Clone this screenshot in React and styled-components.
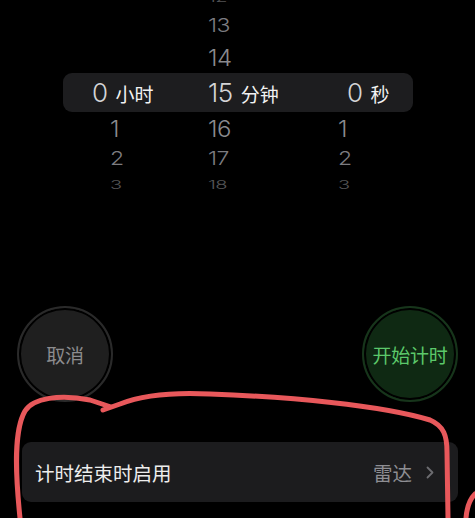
import React from 'react'
import styled, { createGlobalStyle } from "styled-components";

const GlobalStyle = createGlobalStyle`
    html, body {
        margin: 0;
        padding: 0;
        background: #000;
    }
    body {
        font-family: "Inter", "Noto Sans CJK SC", sans-serif;
        -webkit-font-smoothing: antialiased;
    }
`;

const Screen = styled.div`
    position: relative;
    width: 475px;
    height: 518px;
    overflow: hidden;
    background: #000;
    color: #fff;
`;

//picker wheel
const Wheel = styled.div`
    height: 192px;
    overflow: hidden;
`;

const Track = styled.div`
    margin-top: -15px;
    display: flex;
    flex-direction: column;
`;

const Row = styled.div`
    display: grid;
    grid-template-columns: 115px 120px 115px;
    margin: 0 62px 0 63px;
    height: ${({ $h }) => $h}px;
    align-items: center;
    color: ${({ $color }) => $color};
    opacity: ${({ $op }) => $op ?? 1};
    font-size: ${({ $size }) => $size}px;
    font-weight: 300;
`;

const Band = styled(Row)`
    background: #1d1d1f;
    border-radius: 9px;
    color: #d4d4d6;
`;

const Cell = styled.div`
    padding-left: ${({ $x }) => $x}px;
    display: flex;
    align-items: center;
    gap: 8px;
    white-space: nowrap;
`;

const Num = styled.span`
    display: inline-block;
    transform: scaleY(${({ $sy }) => $sy ?? 1});
    letter-spacing: -0.5px;
`;

const Unit = styled.span`
    font-family: "Noto Sans CJK SC", sans-serif;
    font-size: 19px;
    font-weight: 400;
    color: #f2f2f2;
    margin-top: 1px;
`;

//buttons
const Buttons = styled.div`
    display: flex;
    justify-content: space-between;
    padding: 0 17px;
    margin-top: 114px;
`;

const Circle = styled.div`
    width: 96px;
    height: 96px;
    box-sizing: border-box;
    border-radius: 50%;
    border: 2px solid ${({ $ring }) => $ring};
    box-shadow: inset 0 0 0 2px #000;
    background: ${({ $fill }) => $fill};
    color: ${({ $text }) => $text};
    display: flex;
    align-items: center;
    justify-content: center;
    font-family: "Noto Sans CJK SC", sans-serif;
    font-size: 19px;
    letter-spacing: -0.3px;
`;

//setting row
const Setting = styled.div`
    margin: 40px 17px 0 22px;
    height: 60px;
    border-radius: 9px;
    background: #1c1c1e;
    display: flex;
    align-items: center;
    justify-content: space-between;
    padding: 0 24px 0 13px;
    font-family: "Noto Sans CJK SC", sans-serif;
    font-size: 19.5px;
`;

const Label = styled.span`
    color: #ededed;
`;

const Value = styled.span`
    display: flex;
    align-items: center;
    gap: 14px;
    color: #8e8e93;
`;

const Scribble = styled.svg`
    position: absolute;
    left: 0;
    top: 0;
    pointer-events: none;
`;

const above = [
    { v: 12, h: 25, size: 20, sy: 0.6, color: "#6a6a6c", op: 0.8 },
    { v: 13, h: 31, size: 23, sy: 0.8, color: "#7c7c80" },
    { v: 14, h: 32, size: 24, sy: 0.95, color: "#8a8a8e" },
];

const below = [
    { v: 1, h: 33, size: 24, sy: 0.95, color: "#8a8a8e" },
    { v: 2, h: 28, size: 23, sy: 0.8, color: "#7c7c80" },
    { v: 3, h: 24, size: 20, sy: 0.6, color: "#6a6a6c", op: 0.8 },
];

function App() {
  return (
    <Screen>
        <GlobalStyle />
        <Wheel>
            <Track>
                {above.map(r => (
                    <Row key={r.v} $h={r.h} $size={r.size} $color={r.color} $op={r.op}>
                        <Cell />
                        <Cell $x={30}><Num $sy={r.sy}>{r.v}</Num></Cell>
                        <Cell />
                    </Row>
                ))}
                <Band $h={39} $size={26}>
                    <Cell $x={29}><Num>0</Num><Unit>小时</Unit></Cell>
                    <Cell $x={30}><Num>15</Num><Unit>分钟</Unit></Cell>
                    <Cell $x={49}><Num>0</Num><Unit>秒</Unit></Cell>
                </Band>
                {below.map(r => (
                    <Row key={r.v} $h={r.h} $size={r.size} $color={r.color} $op={r.op}>
                        <Cell $x={47}><Num $sy={r.sy}>{r.v}</Num></Cell>
                        <Cell $x={30}><Num $sy={r.sy}>{r.v + 15}</Num></Cell>
                        <Cell $x={40}><Num $sy={r.sy}>{r.v}</Num></Cell>
                    </Row>
                ))}
            </Track>
        </Wheel>

        <Buttons>
            <Circle $fill="#1f1f1f" $ring="#2a2a2a" $text="#8c8c8e">取消</Circle>
            <Circle $fill="#0f2913" $ring="#17351b" $text="#5cc86a">开始计时</Circle>
        </Buttons>

        <Setting>
            <Label>计时结束时启用</Label>
            <Value>
                雷达
                <svg width="8" height="13" viewBox="0 0 8 13">
                    <path d="M1.5 1.5 L6.5 6.5 L1.5 11.5" fill="none" stroke="#6c6c70" strokeWidth="1.8" strokeLinecap="round" strokeLinejoin="round" />
                </svg>
            </Value>
        </Setting>

        <Scribble width="475" height="518" viewBox="0 0 475 518">
            <path
                d="M20 518 C15 470 14 430 25 411 C33 398 60 394 90 400 L111 407 L103 410 L120 404 C140 396 170 392 210 394 C290 397 380 405 430 420 C444 426 447 436 447 452 L448 518"
                fill="none" stroke="#e8585b" strokeWidth="5" strokeLinecap="round" strokeLinejoin="round" />
            <path d="M466 518 C467 506 470 499 475 494" fill="none" stroke="#e8585b" strokeWidth="5" strokeLinecap="round" />
        </Scribble>
    </Screen>
  )
}

export default App
